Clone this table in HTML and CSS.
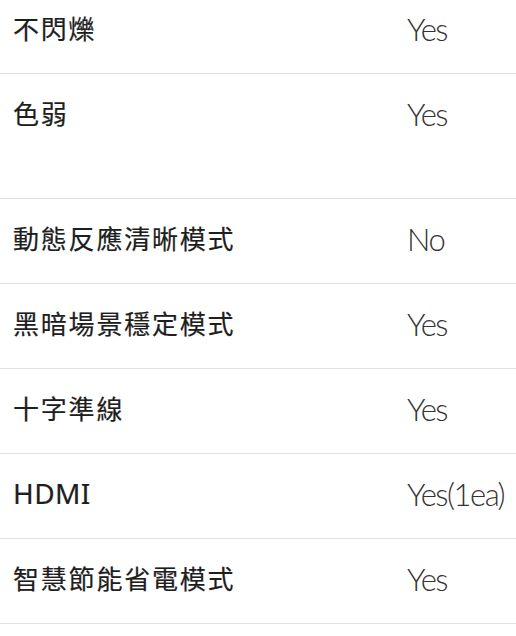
FILE: index.html
```html
<!DOCTYPE html>
<html lang="zh-Hant">
<head>
    <meta charset="UTF-8">
    <meta name="viewport" content="width=device-width, initial-scale=1.0">
    <title>規格</title>
    <link rel="stylesheet" href="styles.css">
</head>
<body>
    <div class="spec-table">
        <div class="spec-row">
            <div class="spec-label">不閃爍</div>
            <div class="spec-value">Yes</div>
        </div>
        <div class="spec-row spec-row-tall">
            <div class="spec-label">色弱</div>
            <div class="spec-value">Yes</div>
        </div>
        <div class="spec-row">
            <div class="spec-label">動態反應清晰模式</div>
            <div class="spec-value">No</div>
        </div>
        <div class="spec-row">
            <div class="spec-label">黑暗場景穩定模式</div>
            <div class="spec-value">Yes</div>
        </div>
        <div class="spec-row">
            <div class="spec-label">十字準線</div>
            <div class="spec-value">Yes</div>
        </div>
        <div class="spec-row">
            <div class="spec-label spec-label-latin">HDMI</div>
            <div class="spec-value">Yes(1ea)</div>
        </div>
        <div class="spec-row">
            <div class="spec-label">智慧節能省電模式</div>
            <div class="spec-value">Yes</div>
        </div>
    </div>
</body>
</html>
```

FILE: styles.css
```css
body {
    margin: 0;
    background-color: #fff;
    font-family: 'Noto Sans CJK TC', 'Noto Sans', sans-serif;
}
.spec-table {
    margin-top: -11px;
    display: flex;
    flex-direction: column;
}
.spec-row {
    display: grid;
    grid-template-columns: 407px 1fr;
    align-items: start;
    height: 84px;
    border-bottom: 1px solid #e0e0e0;
}
.spec-row-tall {
    height: 124px;
}
.spec-label {
    padding: 21px 0 0 13px;
    font-size: 26px;
    font-weight: 400;
    letter-spacing: 1.8px;
    line-height: 36px;
    color: #1e1e1e;
    -webkit-text-stroke: 0.2px #1e1e1e;
}
.spec-label-latin {
    font-family: 'Noto Sans', sans-serif;
    font-size: 28px;
    letter-spacing: 0.4px;
}
.spec-value {
    padding-top: 22px;
    font-family: 'Lato', sans-serif;
    font-weight: 300;
    font-size: 31px;
    letter-spacing: -1.5px;
    line-height: 36px;
    color: #333;
}
```
